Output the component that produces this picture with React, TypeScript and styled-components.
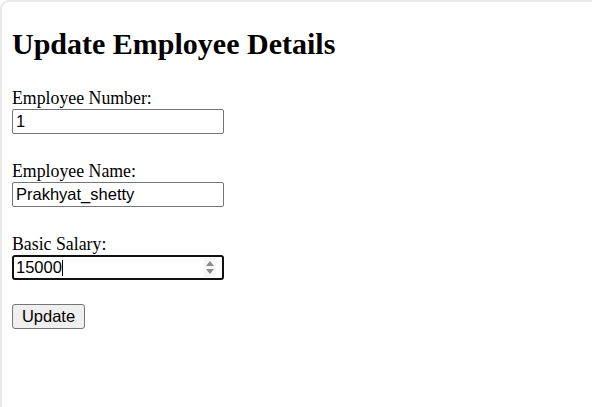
import React, { useState } from 'react';
import styled, { createGlobalStyle } from 'styled-components';

const GlobalStyle = createGlobalStyle`
    html, body {
        margin: 0;
        padding: 0;
        background: #ffffff;
    }
    body {
        font-family: "Liberation Serif", "Times New Roman", serif;
        color: #000000;
    }
`;

const Frame = styled.div`
    box-sizing: border-box;
    min-height: 100vh;
    border-top: 2px solid #e9e9e9;
    border-left: 2px solid #e9e9e9;
    border-top-left-radius: 9px;
    padding: 23px 10px 0 10px;
`;

const Heading = styled.h1`
    margin: 0;
    font-size: 30px;
    line-height: 37px;
    font-weight: bold;
`;

const Form = styled.form`
    display: flex;
    flex-direction: column;
    align-items: flex-start;
    gap: 28px;
    margin-top: 27px;
`;

const Field = styled.div`
    display: flex;
    flex-direction: column;
    align-items: flex-start;
    gap: 2px;
`;

const Label = styled.label`
    display: block;
    font-size: 17.8px;
    line-height: 18px;
`;

const InputWrap = styled.div`
    position: relative;
`;

const Input = styled.input<{ $focused?: boolean }>`
    box-sizing: border-box;
    width: 212px;
    height: 25px;
    margin: 0;
    padding: 1px 3px;
    font-family: "Liberation Sans", Arial, sans-serif;
    font-size: 16.5px;
    color: #000000;
    background: #ffffff;
    border: ${(p) => (p.$focused ? '2px solid #101010' : '1px solid #767676')};
    border-radius: ${(p) => (p.$focused ? '3px' : '2px')};
    outline: none;
    padding-left: ${(p) => (p.$focused ? '2px' : '3px')};
    caret-color: transparent;
    -moz-appearance: textfield;

    &::-webkit-inner-spin-button,
    &::-webkit-outer-spin-button {
        -webkit-appearance: none;
        margin: 0;
    }
`;

const Caret = styled.span<{ $left: number }>`
    position: absolute;
    top: 5px;
    left: ${(p) => p.$left}px;
    width: 1px;
    height: 16px;
    background: #000000;
    pointer-events: none;
`;

const Spinner = styled.svg`
    position: absolute;
    top: 3px;
    left: 192px;
    width: 12px;
    height: 19px;
    pointer-events: none;
`;

const Button = styled.button`
    box-sizing: border-box;
    width: 73px;
    height: 25px;
    margin-top: -4px;
    padding: 0;
    font-family: "Liberation Sans", Arial, sans-serif;
    font-size: 16.5px;
    color: #000000;
    background: #efefef;
    border: 1px solid #767676;
    border-radius: 3px;
`;

const App = () => {
    const [empNo, setEmpNo] = useState('1');
    const [empName, setEmpName] = useState('Prakhyat_shetty');
    const [salary, setSalary] = useState('15000');

    return (
        <>
            <GlobalStyle />
            <Frame>
                <Heading>Update Employee Details</Heading>
                <Form onSubmit={(e) => e.preventDefault()}>
                    <Field>
                        <Label htmlFor="empNo">Employee Number:</Label>
                        <Input id="empNo" type="text" value={empNo} onChange={(e) => setEmpNo(e.target.value)} />
                    </Field>
                    <Field>
                        <Label htmlFor="empName">Employee Name:</Label>
                        <Input id="empName" type="text" value={empName} onChange={(e) => setEmpName(e.target.value)} />
                    </Field>
                    <Field>
                        <Label htmlFor="salary">Basic Salary:</Label>
                        <InputWrap>
                            <Input id="salary" type="number" $focused value={salary} onChange={(e) => setSalary(e.target.value)} />
                            <Caret $left={4 + salary.length * 9.2} />
                            <Spinner viewBox="0 0 12 19">
                                <rect x="0" y="0" width="12" height="19" fill="#f6f6f6" />
                                <polygon points="2,8 6,3 10,8" fill="#8b8b8b" />
                                <polygon points="2,11 6,16 10,11" fill="#8b8b8b" />
                            </Spinner>
                        </InputWrap>
                    </Field>
                    <Button type="submit">Update</Button>
                </Form>
            </Frame>
        </>
    );
};

export default App;
